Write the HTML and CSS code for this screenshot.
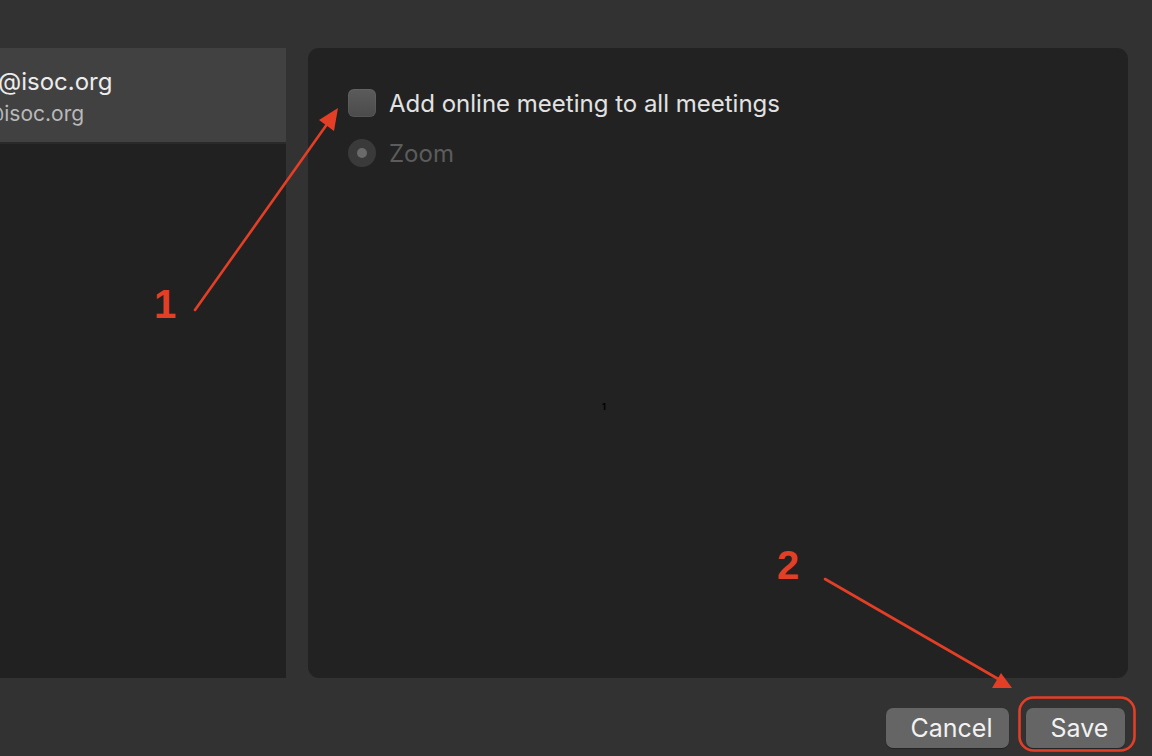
FILE: index.html
```html
<!DOCTYPE html>
<html>
<head>
<meta charset="utf-8">
<link rel="stylesheet" href="styles.css">
</head>
<body>
<div class="window">
  <div class="content">
    <aside class="sidebar">
      <div class="account selected">
        <div class="acc-name">@isoc.org</div>
        <div class="acc-mail">@isoc.org</div>
      </div>
    </aside>
    <section class="panel">
      <label class="option">
        <span class="checkbox"></span>
        <span class="opt-label">Add online meeting to all meetings</span>
      </label>
      <label class="option disabled">
        <span class="radio"><span class="dot"></span></span>
        <span class="opt-label">Zoom</span>
      </label>
      <div class="stray">1</div>
    </section>
  </div>
  <footer class="footer">
    <button class="btn">Cancel</button>
    <button class="btn save">Save</button>
  </footer>
</div>
<svg class="annot" width="1152" height="756" viewBox="0 0 1152 756">
  <g stroke="#e33f26" stroke-width="2.6" fill="none" stroke-linecap="round">
    <line x1="195" y1="310" x2="330" y2="120"/>
    <line x1="825" y1="579" x2="1000" y2="680"/>
    <rect x="1019.5" y="697.5" width="115" height="53" rx="14" ry="14"/>
  </g>
  <g fill="#e33f26">
    <polygon points="338,108 334,131 319,120"/>
    <polygon points="1012,688 992,688 1001,673"/>
  </g>
  <text x="154" y="318" class="num">1</text>
  <text x="777" y="579" class="num">2</text>
</svg>
</body>
</html>
```

FILE: styles.css
```css
* { box-sizing: border-box; }
html, body {
  margin: 0;
  padding: 0;
  width: 1152px;
  height: 756px;
  overflow: hidden;
  background: #323232;
  font-family: "Inter", "Liberation Sans", Arial, sans-serif;
}
.window {
  position: relative;
  width: 1152px;
  height: 756px;
  padding-top: 48px;
}
.content {
  display: flex;
  gap: 22px;
  height: 630px;
}
.sidebar {
  width: 286px;
  background: #212121;
  overflow: hidden;
}
.account.selected {
  height: 96px;
  background: #414141;
  border-bottom: 2px solid #2a2a2a;
  padding-top: 19px;
}
.acc-name {
  color: #ececec;
  font-size: 24px;
  line-height: 30px;
  margin-left: -2px;
}
.acc-mail {
  color: #b9b9b9;
  font-size: 21px;
  line-height: 26px;
  margin-top: 4px;
  margin-left: -16px;
}
.panel {
  position: relative;
  width: 820px;
  background: #222222;
  border-radius: 11px;
  padding: 41px 0 0 40px;
  display: flex;
  flex-direction: column;
  gap: 22px;
}
.option {
  display: flex;
  align-items: center;
  gap: 13px;
  height: 28px;
}
.checkbox {
  width: 28px;
  height: 28px;
  border-radius: 6px;
  background: linear-gradient(#5b5b5b, #4b4b4b);
  box-shadow: inset 0 0 0 1px rgba(255,255,255,0.05);
}
.opt-label {
  color: #e2e2e2;
  font-size: 24px;
  letter-spacing: 0;
}
.option.disabled .opt-label { color: #5c5c5c; }
.radio {
  width: 28px;
  height: 28px;
  border-radius: 50%;
  background: #3a3a3a;
  display: flex;
  align-items: center;
  justify-content: center;
}
.dot {
  width: 10px;
  height: 10px;
  border-radius: 50%;
  background: #6a6a6a;
}
.stray {
  position: absolute;
  left: 294px;
  top: 353px;
  font-size: 9px;
  font-weight: bold;
  color: #000;
}
.footer {
  display: flex;
  justify-content: flex-end;
  gap: 17px;
  padding: 30px 27px 0 0;
}
.btn {
  height: 40px;
  border: none;
  border-radius: 7px;
  background: #656565;
  color: #f2f2f2;
  font-family: "Inter", "Liberation Sans", Arial, sans-serif;
  font-size: 25px;
  padding: 0 0 0 8px;
  box-shadow: 0 1px 1px rgba(0,0,0,0.3);
}
.btn:first-child { width: 123px; }
.btn.save { width: 99px; }
.annot {
  position: absolute;
  left: 0;
  top: 0;
  pointer-events: none;
}
.num {
  fill: #e33f26;
  font-family: "Liberation Sans", Arial, sans-serif;
  font-weight: bold;
  font-size: 40px;
}
```
